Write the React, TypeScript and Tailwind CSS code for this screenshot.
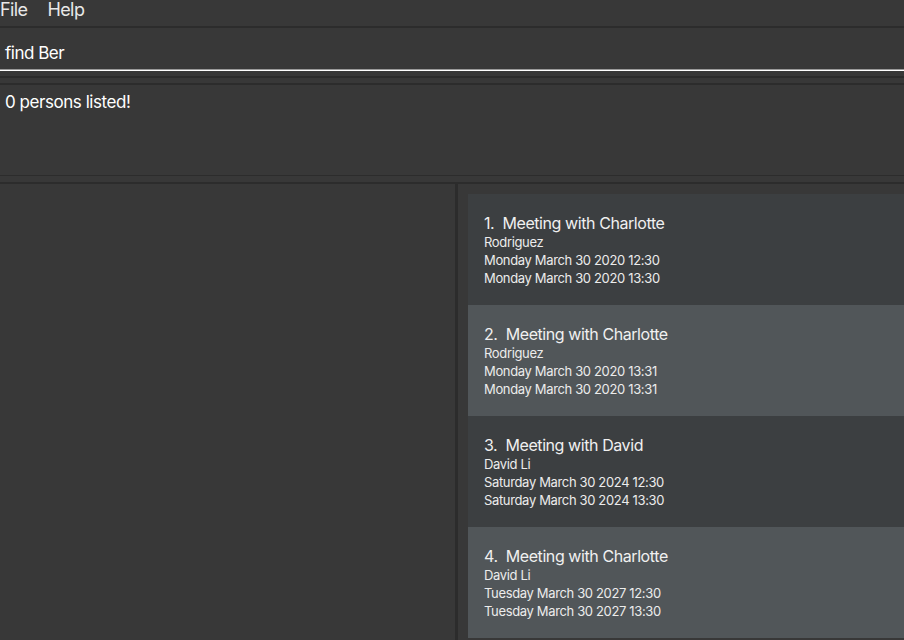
const meetings = [
  { title: "Meeting with Charlotte", who: "Rodriguez", start: "Monday March 30 2020 12:30", end: "Monday March 30 2020 13:30" },
  { title: "Meeting with Charlotte", who: "Rodriguez", start: "Monday March 30 2020 13:31", end: "Monday March 30 2020 13:31" },
  { title: "Meeting with David", who: "David Li", start: "Saturday March 30 2024 12:30", end: "Saturday March 30 2024 13:30" },
  { title: "Meeting with Charlotte", who: "David Li", start: "Tuesday March 30 2027 12:30", end: "Tuesday March 30 2027 13:30" },
];

function Divider() {
  return <div className="h-[2px] bg-[#2c2c2c]" />;
}

export default function App() {
  return (
    <div
      className="w-[904px] h-[640px] bg-[#383838] text-white flex flex-col overflow-hidden"
      style={{ fontFamily: "Inter, 'Open Sans', sans-serif" }}
    >
      {/* menu bar */}
      <div className="h-[26px] flex gap-[20px] text-[18px] leading-[20px] tracking-[-0.6px] text-[#e8e8e8]">
        <span>File</span>
        <span>Help</span>
      </div>
      <Divider />

      {/* command box */}
      <div className="h-[41px] flex items-center pl-[5px] text-[17px] tracking-[-0.5px] pt-[10px]">find Ber</div>
      <div className="h-[1px] bg-[#9a9a9a]" />
      <div className="h-[1px] bg-white" />
      <div className="h-[5px]" />
      <Divider />
      <div className="h-[5px]" />
      <Divider />

      {/* result display */}
      <div className="h-[90px] pl-[5px] pt-[5px] text-[17px] leading-[24px] tracking-[-0.45px]">0 persons listed!</div>
      <div className="h-[1px] bg-[#2c2c2c]" />
      <div className="h-[6px]" />
      <Divider />

      {/* lists */}
      <div className="flex-1 flex min-h-0">
        <div className="w-[455px]" />
        <div className="w-[3px] bg-[#2c2c2c]" />
        <div className="flex-1 pl-[10px] pt-[10px] flex flex-col">
          {meetings.map((m, i) => (
            <div
              key={i}
              className={
                "h-[111px] pl-[16px] pt-[19px] shrink-0 " +
                (i % 2 === 0 ? "bg-[#3c3f41]" : "bg-[#515659]")
              }
            >
              <div className="text-[16px] leading-[20px] tracking-[-0.42px] text-[#f0f0f0]">
                {i + 1}.&nbsp; {m.title}
              </div>
              <div className="text-[13px] leading-[18px] tracking-[-0.35px] text-[#ececec]">{m.who}</div>
              <div className="text-[13px] leading-[18px] tracking-[-0.35px] text-[#ececec]">{m.start}</div>
              <div className="text-[13px] leading-[18px] tracking-[-0.35px] text-[#ececec]">{m.end}</div>
            </div>
          ))}
        </div>
      </div>
    </div>
  );
}
